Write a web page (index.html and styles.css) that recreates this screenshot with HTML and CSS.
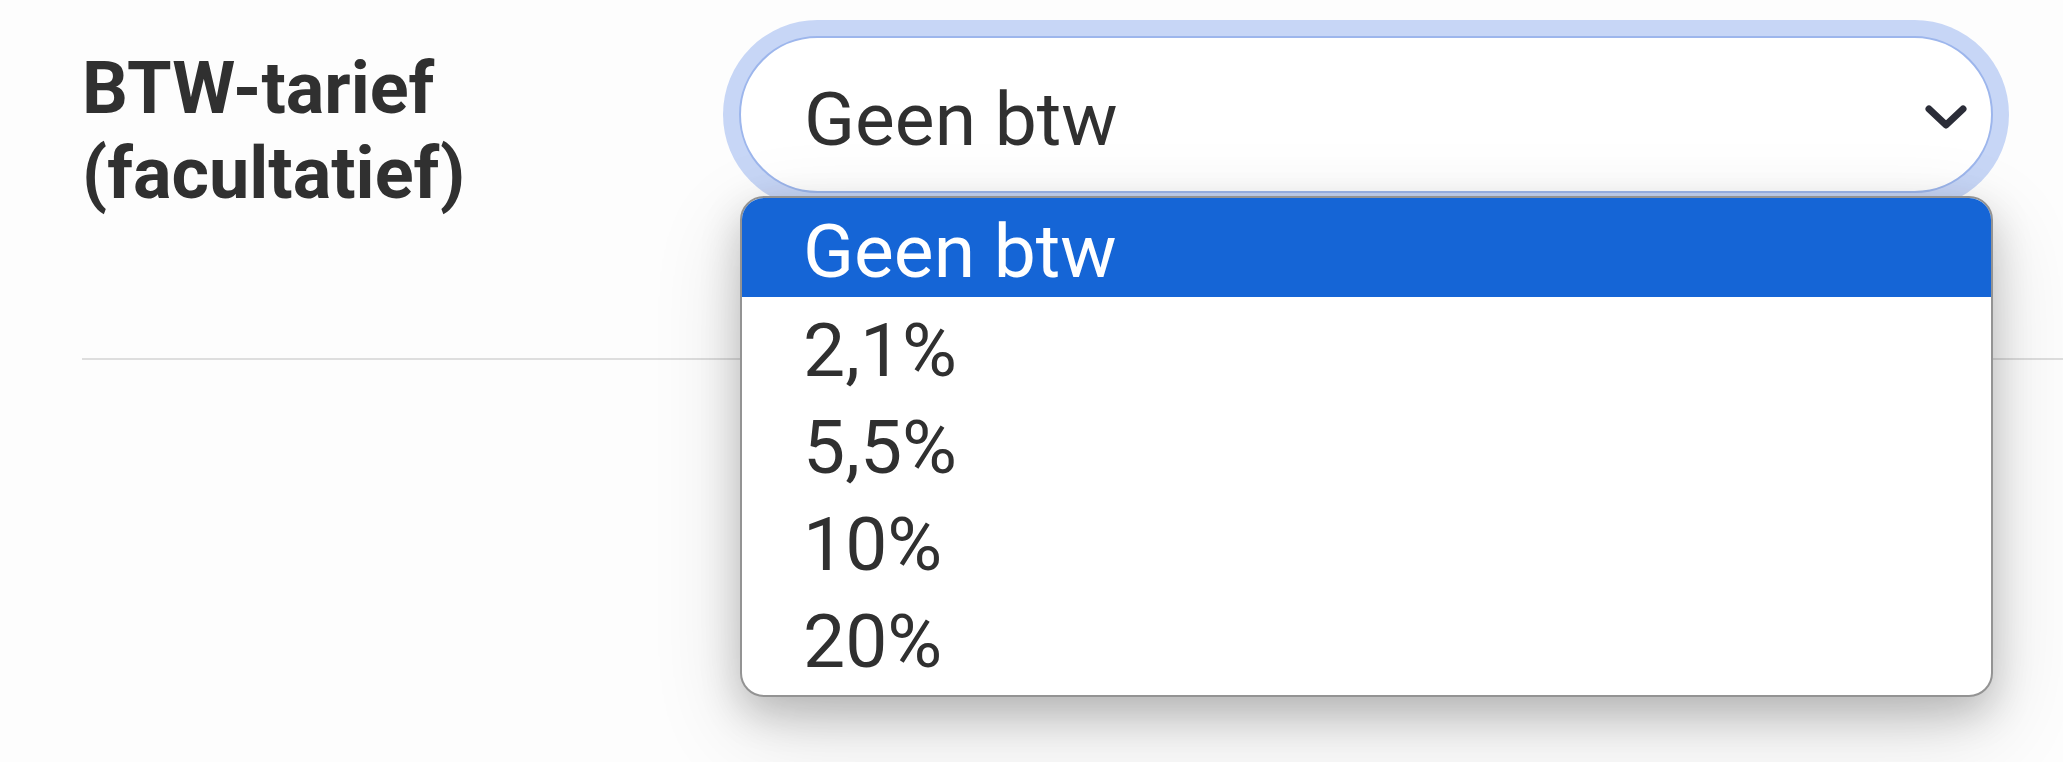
FILE: index.html
```html
<!DOCTYPE html>
<html lang="nl">
<head>
    <meta charset="UTF-8">
    <title>BTW-tarief</title>
    <link rel="stylesheet" href="styles.css">
</head>
<body>
    <div class="form">
        <div class="field-row">
            <label class="field-label" for="vat">BTW-tarief<br>(facultatief)</label>

            <div class="select-wrap">
                <div class="select focused" id="vat">
                    <span class="select-value">Geen btw</span>
                    <svg class="chevron" width="44" height="30" viewBox="0 0 44 30">
                        <polyline points="5,7 22,23 39,7" fill="none" stroke="#2b2d38" stroke-width="7" stroke-linecap="round" stroke-linejoin="round"/>
                    </svg>
                </div>

                <ul class="options">
                    <li class="option selected">Geen btw</li>
                    <li class="option">2,1%</li>
                    <li class="option">5,5%</li>
                    <li class="option">10%</li>
                    <li class="option">20%</li>
                </ul>
            </div>
        </div>
    </div>
</body>
</html>
```

FILE: styles.css
```css
:root {
    --text-color: #303030;
    --ring-color: #c7d6f6;
    --ring-border: #9db6ec;
    --selected-bg: #1565d6;
}
body {
    margin: 0;
    min-height: 762px;
    background-color: #fdfdfd;
    font-family: Roboto, "Liberation Sans", sans-serif;
    color: var(--text-color);
}
.form {
    padding: 36px 0 0 82px;
}
.field-row {
    display: flex;
    align-items: flex-start;
    padding-bottom: 142px;
    border-bottom: 2px solid #dedede;
}
.field-label {
    width: 657px;
    flex-shrink: 0;
    margin-top: 10px;
    font-size: 72px;
    font-weight: 700;
    line-height: 85px;
}

.select-wrap {
    position: relative;
    width: 1254px;
}
.select {
    display: flex;
    align-items: center;
    box-sizing: border-box;
    height: 157px;
    padding: 8px 23px 0 63px;
    background-color: #fff;
    border: 2px solid var(--ring-border);
    border-radius: 80px;
}
.select.focused {
    box-shadow: 0 0 0 16px var(--ring-color);
}
.select-value {
    flex: 1;
    font-size: 75px;
    line-height: 88px;
}
.chevron {
    display: block;
    margin-top: -4px;
}

.options {
    position: absolute;
    top: 160px;
    left: 1px;
    right: 0;
    z-index: 2;
    margin: 0;
    padding: 0 0 10px;
    list-style: none;
    background-color: #fff;
    border: 2px solid #939393;
    border-radius: 24px;
    overflow: hidden;
    box-shadow: 0 16px 40px rgba(0, 0, 0, 0.2), 0 30px 90px rgba(0, 0, 0, 0.14);
}
.option {
    box-sizing: border-box;
    height: 97px;
    padding: 9px 0 0 61px;
    font-size: 75px;
    line-height: 88px;
}
.option.selected {
    height: 99px;
    background-color: var(--selected-bg);
    color: #fff;
}
```
